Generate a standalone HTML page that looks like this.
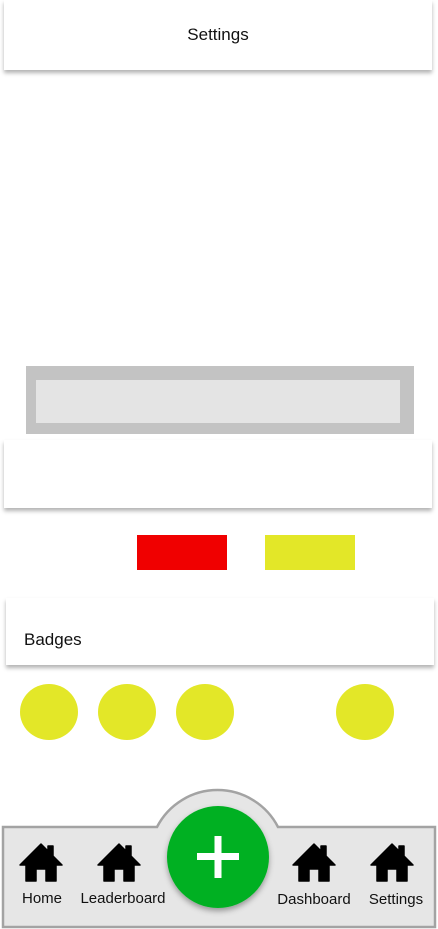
<!DOCTYPE html>
<html><head><style>
body{margin:0;width:438px;height:929px;background:#fff;position:relative;overflow:hidden;font-family:"Liberation Sans",sans-serif;}
.abs{position:absolute;}
.card{background:#fff;box-shadow:0 3px 4px rgba(0,0,0,0.3);}
.lbl{position:absolute;font-size:15px;color:#111;text-align:center;width:100px;}
.c{position:absolute;width:58px;height:56px;border-radius:50%;background:#e3e728;top:684px;}
</style></head><body>
<div class="abs card" style="left:4px;top:0;width:428px;height:70px;"></div>
<div class="abs" style="left:4px;top:25px;width:428px;text-align:center;font-size:17px;color:#111;">Settings</div>
<div class="abs" style="left:26px;top:366px;width:388px;height:68px;background:#c3c3c3;"></div>
<div class="abs" style="left:36px;top:380px;width:364px;height:43px;background:#e4e4e4;"></div>
<div class="abs card" style="left:4px;top:440px;width:428px;height:68px;"></div>
<div class="abs" style="left:137px;top:535px;width:90px;height:35px;background:#f00000;"></div>
<div class="abs" style="left:265px;top:535px;width:90px;height:35px;background:#e3e728;"></div>
<div class="abs card" style="left:6px;top:598px;width:428px;height:67px;"></div>
<div class="abs" style="left:24px;top:630px;font-size:17px;color:#111;">Badges</div>
<div class="c" style="left:20px"></div><div class="c" style="left:98px"></div><div class="c" style="left:176px"></div><div class="c" style="left:336px"></div>
<svg class="abs" style="left:0;top:780px" width="438" height="149">
<path d="M3 47 H157 A68 68 0 0 1 278 47 H435 V147 H3 Z" fill="#e6e6e6" stroke="#a3a3a3" stroke-width="2.5"/>
<defs><filter id="s"><feDropShadow dx="0" dy="3" stdDeviation="3" flood-opacity="0.35"/></filter>
<g id="h"><path d="M0 -19 L-21 2 L-15 2 L-15 18 L-5 18 L-5 6 L5 6 L5 18 L15 18 L15 2 L21 2 L12 -7 L12 -17 L7 -17 L7 -12 Z" fill="#000" stroke="#000" stroke-width="1.5" stroke-linejoin="round"/></g></defs>
<circle cx="218" cy="77" r="51" fill="#03b023" filter="url(#s)"/>
<rect x="197" y="73" width="42" height="7" fill="#fff"/><rect x="214.5" y="56" width="7" height="42" fill="#fff"/>
<use href="#h" x="41" y="83"/><use href="#h" x="119" y="83"/><use href="#h" x="314" y="83"/><use href="#h" x="392" y="83"/>
</svg>
<div class="lbl" style="left:-8px;top:890px">Home</div>
<div class="lbl" style="left:73px;top:890px">Leaderboard</div>
<div class="lbl" style="left:264px;top:891px">Dashboard</div>
<div class="lbl" style="left:346px;top:891px">Settings</div>
</body></html>
